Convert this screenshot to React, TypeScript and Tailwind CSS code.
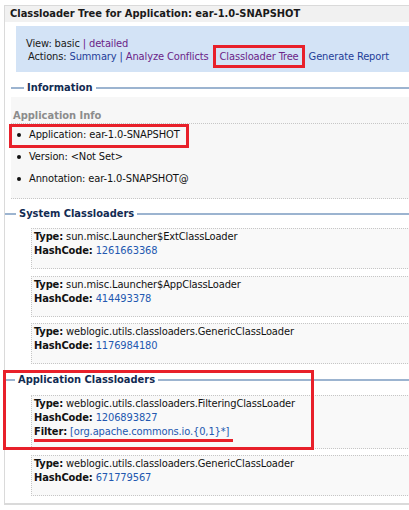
import React from "react";

const FONT = "font-['DejaVu_Sans_Condensed','Liberation_Sans',sans-serif]";

function Heading({ title, indent, leftLine }: { title: string; indent: string; leftLine: string }) {
  return (
    <div className={`flex items-center h-[14px] ${indent}`}>
      <div className={`h-[2px] bg-[#9cb4d0] ${leftLine}`} />
      <div className="px-[3px] font-bold text-[#122b52] text-[11px] tracking-normal leading-[14px] whitespace-nowrap">{title}</div>
      <div className="h-[2px] bg-[#9cb4d0] flex-1" />
    </div>
  );
}

function Box({ type, hash, extra, className = "" }: { type: string; hash: string; extra?: React.ReactNode; className?: string }) {
  return (
    <div className={`ml-[26px] border border-dotted border-[#c6c6c6] bg-[#f9f9f9] pl-[2px] pt-[1px] leading-[14px] text-[#111] ${className}`}>
      <div className="whitespace-nowrap">
        <span className="font-bold">Type:</span> {type}
      </div>
      <div className="whitespace-nowrap">
        <span className="font-bold">HashCode:</span> <span className="text-[#2358b0]">{hash}</span>
      </div>
      {extra}
    </div>
  );
}

export default function App() {
  return (
    <div className={`w-[409px] h-[510px] bg-white overflow-hidden relative pt-[5px] pl-[4px] text-[11px] tracking-[-0.12px] ${FONT}`}>
      <div className="w-[430px] border-l border-t border-b-2 border-[#dadada]">
        {/* Title bar */}
        <div className="h-[16px] bg-[#f1f1f1] pl-[5px] font-bold text-[11px] tracking-normal leading-[16px] text-[#1a1a1a] whitespace-nowrap">
          Classloader Tree for Application: ear-1.0-SNAPSHOT
        </div>

        {/* Nav box */}
        <div className="mt-[4px] ml-[11px] h-[46px] bg-[#d3e3f6] pl-[10px] pt-[11px] leading-[13px] text-[#1a1a1a]">
          <div className="whitespace-nowrap">
            View: basic <span className="text-[#6b2488]">|</span> <span className="text-[#6b2488]">detailed</span>
          </div>
          <div className="ml-[2px] flex items-center whitespace-nowrap">
            <span>Actions:&nbsp;</span>
            <span className="text-[#1f3d99]">Summary</span>
            <span className="text-[#1f3d99]">&nbsp;|&nbsp;</span>
            <span className="text-[#6b2488]">Analyze Conflicts</span>
            <span className="relative ml-[11px] text-[#6b2488]">
              Classloader Tree
              <span className="absolute left-[-7px] right-[-6px] top-[-5px] bottom-[-5px] border-[3px] border-[#e8202a]" />
            </span>
            <span className="ml-[10px] text-[#1f3d99]">Generate Report</span>
          </div>
        </div>

        {/* Information */}
        <div className="mt-[9px]">
          <Heading title="Information" indent="ml-[6px]" leftLine="w-[13px]" />
        </div>
        <div className="ml-[6px] mt-[2px] bg-[#f7f7f7] border-b border-dotted border-[#c6c6c6] pb-[8px]">
          <div className="pt-[12px] pl-[2px] font-bold text-[11px] tracking-normal leading-[14px] text-[#8c8c8c] border-b border-dotted border-[#c6c6c6]">
            Application Info
          </div>
          <ul className="text-[#111]">
            {["Application: ear-1.0-SNAPSHOT", "Version: <Not Set>", "Annotation: ear-1.0-SNAPSHOT@"].map((t, i) => (
              <li key={t} className="relative h-[22px] flex items-center">
                <span className="ml-[6px] w-[4px] h-[4px] rounded-full bg-[#111]" />
                <span className="ml-[8px] whitespace-nowrap">{t}</span>
                {i === 0 && (
                  <span className="absolute left-[-2px] top-0 w-[180px] h-[24px] border-[3px] border-[#e8202a]" />
                )}
              </li>
            ))}
          </ul>
        </div>

        {/* System Classloaders */}
        <div className="mt-[8px]">
          <Heading title="System Classloaders" indent="" leftLine="w-[11px]" />
        </div>
        <Box className="mt-[7px] pb-[10px]" type="sun.misc.Launcher$ExtClassLoader" hash="1261663368" />
        <Box className="mt-[7px] pb-[10px]" type="sun.misc.Launcher$AppClassLoader" hash="414493378" />
        <Box className="mt-[6px] pb-[10px]" type="weblogic.utils.classloaders.GenericClassLoader" hash="1176984180" />

        {/* Application Classloaders */}
        <div className="mt-[9px]">
          <Heading title="Application Classloaders" indent="ml-[1px]" leftLine="w-[9px]" />
        </div>
        <Box
          className="mt-[8px] pb-[9px]"
          type="weblogic.utils.classloaders.FilteringClassLoader"
          hash="1206893827"
          extra={
            <div className="whitespace-nowrap">
              <span className="relative">
                <span className="font-bold">Filter:</span> <span className="text-[#2358b0]">[org.apache.commons.io.{"{"}0,1{"}"}*]</span>
                <span className="absolute left-0 right-[-4px] bottom-[-4px] h-[3px] bg-[#e8202a]" />
              </span>
            </div>
          }
        />
        <Box className="mt-[6px] pb-[10px]" type="weblogic.utils.classloaders.GenericClassLoader" hash="671779567" />
        <div className="h-[7px]" />
      </div>

      {/* Annotation box around Application Classloaders */}
      <div className="absolute left-[3px] top-[370px] w-[311px] h-[80px] border-[3px] border-[#e8202a]" />
    </div>
  );
}
